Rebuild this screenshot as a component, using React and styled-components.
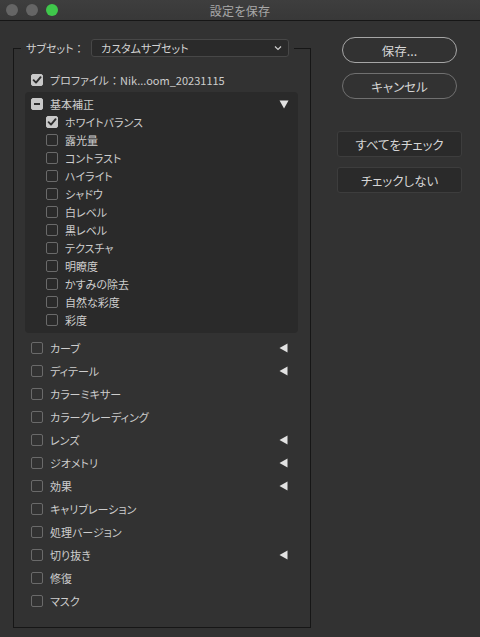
import React from "react";
import styled, { createGlobalStyle } from "styled-components";

const GlobalStyle = createGlobalStyle`
    html, body {
        margin: 0;
        padding: 0;
        background: #323232;
    }
    body {
        font-family: "Noto Sans CJK JP", "Noto Sans", "Liberation Sans", sans-serif;
        color: #d0d0d0;
    }
`;

const basicItems = [
    { label: "ホワイトバランス", checked: true },
    { label: "露光量" },
    { label: "コントラスト" },
    { label: "ハイライト" },
    { label: "シャドウ" },
    { label: "白レベル" },
    { label: "黒レベル" },
    { label: "テクスチャ" },
    { label: "明瞭度" },
    { label: "かすみの除去" },
    { label: "自然な彩度" },
    { label: "彩度" },
];

const groups = [
    { label: "カーブ", arrow: true },
    { label: "ディテール", arrow: true },
    { label: "カラーミキサー" },
    { label: "カラーグレーディング" },
    { label: "レンズ", arrow: true },
    { label: "ジオメトリ", arrow: true },
    { label: "効果", arrow: true },
    { label: "キャリブレーション" },
    { label: "処理バージョン" },
    { label: "切り抜き", arrow: true },
    { label: "修復" },
    { label: "マスク" },
];

const CheckBox = ({ checked, mixed }) => (
    <Box $on={checked || mixed}>
        {checked && (
            <svg width="10" height="10" viewBox="0 0 10 10">
                <path d="M1.6 5.2 L4 7.6 L8.6 2.2" fill="none" stroke="#2e2e2e" strokeWidth="1.9" strokeLinecap="round" strokeLinejoin="round" />
            </svg>
        )}
        {mixed && <Dash />}
    </Box>
);

const Triangle = ({ down }) => (
    <Arrow width="10" height="10" viewBox="0 0 10 10">
        {down
            ? <polygon points="0.5,1.5 9.5,1.5 5,9.5" fill="#e2e2e2" />
            : <polygon points="8.5,0.5 8.5,9.5 0.5,5" fill="#e2e2e2" />}
    </Arrow>
);

const App = () => {
    return (
        <Window>
            <GlobalStyle />
            <TitleBar>
                <Lights>
                    <Light />
                    <Light />
                    <Light $color="#3fc74b" />
                </Lights>
                <Title>設定を保存</Title>
            </TitleBar>
            <Body>
                <Fieldset>
                    <Legend>
                        <LegendLabel>サブセット<Colon>：</Colon></LegendLabel>
                        <SelectBox type="button">
                            <span>カスタムサブセット</span>
                            <svg width="8" height="6" viewBox="0 0 8 6">
                                <path d="M1 1.5 L4 4.5 L7 1.5" fill="none" stroke="#cfcfcf" strokeWidth="1.2" />
                            </svg>
                        </SelectBox>
                    </Legend>

                    <ProfileRow>
                        <CheckBox checked />
                        <Label>プロファイル<Colon>：</Colon>Nik...oom_20231115</Label>
                    </ProfileRow>

                    <Panel>
                        <Row>
                            <CheckBox mixed />
                            <Label>基本補正</Label>
                            <Triangle down />
                        </Row>
                        {basicItems.map((item) => (
                            <Row key={item.label} $sub>
                                <CheckBox checked={item.checked} />
                                <Label>{item.label}</Label>
                            </Row>
                        ))}
                    </Panel>

                    <GroupList>
                        {groups.map((g) => (
                            <Row key={g.label} $tall>
                                <CheckBox />
                                <Label>{g.label}</Label>
                                {g.arrow && <Triangle />}
                            </Row>
                        ))}
                    </GroupList>
                </Fieldset>

                <Side>
                    <PillButton $strong>保存...</PillButton>
                    <PillButton>キャンセル</PillButton>
                    <Spacer />
                    <FlatButton>すべてをチェック</FlatButton>
                    <FlatButton>チェックしない</FlatButton>
                </Side>
            </Body>
        </Window>
    );
};

export default App;


const Window = styled.div`
    width: 480px;
    height: 637px;
    background: #323232;
    overflow: hidden;
    font-feature-settings: "palt";
`;

const TitleBar = styled.div`
    position: relative;
    height: 20px;
    display: flex;
    align-items: center;
    justify-content: center;
    background: linear-gradient(#3e3e3e, #383838);
    border-bottom: 1px solid #161616;
`;

const Lights = styled.div`
    position: absolute;
    left: 6px;
    top: 4px;
    display: flex;
    gap: 8px;
`;

const Light = styled.span`
    width: 12px;
    height: 12px;
    border-radius: 50%;
    background: ${(p) => p.$color || "#656565"};
`;

const Title = styled.div`
    font-size: 12px;
    color: #a8a8a8;
    letter-spacing: 0.3px;
`;

const Body = styled.div`
    display: flex;
    align-items: flex-start;
    padding: 16px 0 0 13px;
`;

const Fieldset = styled.fieldset`
    box-sizing: border-box;
    width: 298px;
    height: 589px;
    margin: 2px 0 0;
    padding: 0 12px 0 11px;
    border: 1px solid #161616;
    min-inline-size: 0;
`;

const Legend = styled.legend`
    display: flex;
    align-items: center;
    height: 18px;
    margin-left: -4px;
    padding: 0 5px;
`;

const LegendLabel = styled.span`
    width: 65px;
    flex: none;
    font-size: 11px;
    color: #cfcfcf;
    white-space: nowrap;
`;

const Colon = styled.span`
    font-feature-settings: normal;
`;

const SelectBox = styled.button`
    box-sizing: border-box;
    width: 198px;
    height: 18px;
    display: flex;
    align-items: center;
    justify-content: space-between;
    padding: 0 6px 0 9px;
    background: #2a2a2a;
    border: 1px solid #474747;
    border-radius: 3px;
    font: inherit;
    font-size: 11px;
    color: #d2d2d2;
`;

const ProfileRow = styled.div`
    display: flex;
    align-items: center;
    height: 18px;
    margin: 14px 0 3px;
    padding-left: 6px;
    gap: 7px;
`;

const Panel = styled.div`
    background: #2a2a2a;
    border-radius: 4px;
    padding: 3px 0 4px;
`;

const GroupList = styled.div`
    margin-top: 3px;
`;

const Row = styled.div`
    display: flex;
    align-items: center;
    gap: 7px;
    height: ${(p) => (p.$tall ? "23px" : "18px")};
    padding-left: ${(p) => (p.$sub ? "21px" : "6px")};
    padding-right: 9px;
`;

const Label = styled.span`
    flex: 1;
    font-size: 11px;
    color: #cdcdcd;
    white-space: nowrap;
`;

const Box = styled.span`
    box-sizing: border-box;
    width: 12px;
    height: 12px;
    flex: none;
    display: flex;
    align-items: center;
    justify-content: center;
    border-radius: 2px;
    background: ${(p) => (p.$on ? "#c8c8c8" : "transparent")};
    border: 1px solid ${(p) => (p.$on ? "#c8c8c8" : "#6a6a6a")};
`;

const Dash = styled.span`
    width: 6px;
    height: 2px;
    background: #2e2e2e;
`;

const Arrow = styled.svg`
    flex: none;
`;

const Side = styled.div`
    width: 125px;
    margin-left: 26px;
    display: flex;
    flex-direction: column;
    align-items: center;
    gap: 10px;
`;

const Spacer = styled.div`
    height: 12px;
`;

const PillButton = styled.button`
    box-sizing: border-box;
    width: 115px;
    height: 26px;
    border-radius: 13px;
    background: transparent;
    border: 1px solid ${(p) => (p.$strong ? "#a6a6a6" : "#707070")};
    font: inherit;
    font-size: 12.5px;
    color: #d6d6d6;
`;

const FlatButton = styled.button`
    box-sizing: border-box;
    width: 125px;
    height: 26px;
    border-radius: 3px;
    background: #2a2a2a;
    border: 1px solid #3d3d3d;
    font: inherit;
    font-size: 12.5px;
    color: #d6d6d6;
`;
